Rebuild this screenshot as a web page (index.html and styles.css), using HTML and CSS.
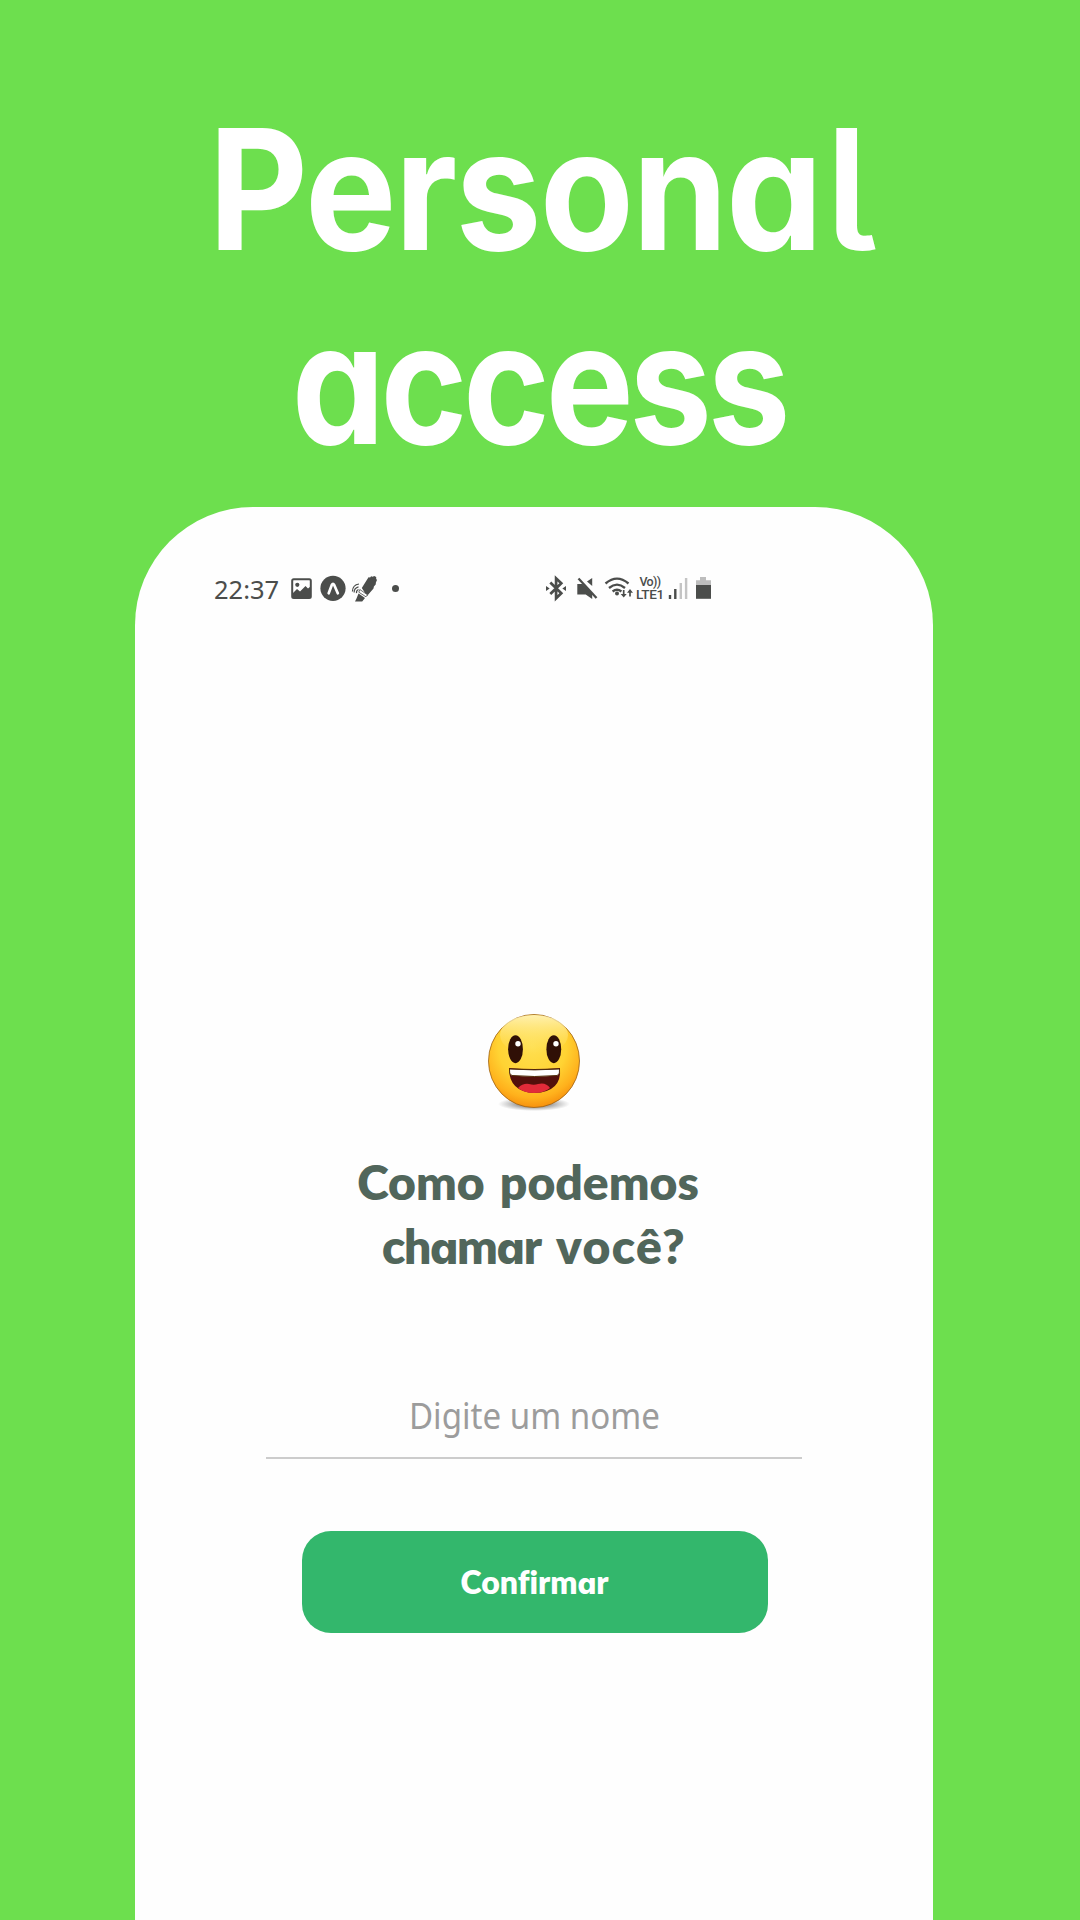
FILE: index.html
```html
<!DOCTYPE html>
<html lang="pt-BR">
<head>
<meta charset="utf-8">
<title>Personal access</title>
<link rel="stylesheet" href="styles.css">
</head>
<body>
<main class="poster">
  <h1 class="headline"><span class="headline-first">Persona<span class="wide-l">l</span></span><br><span class="headline-second">access</span></h1>
  <section class="phone">
    <header class="status">
      <div class="status-left">
        <time class="clock">22:37</time>
        <svg class="icon" width="22" height="30" viewBox="290 573 22 30"><rect x="292.2" y="579.2" width="18.6" height="18.8" rx="1.5" fill="none" stroke="currentColor" stroke-width="2"/><circle cx="297.3" cy="584.8" r="2.1" fill="currentColor"/><path d="M293 593l4-4 3 2.5 5.500-5.500 2.500 2.500 2.500-2v11.500h-17.500z" fill="currentColor"/></svg>
        <svg class="icon icon-expo" width="26" height="30" viewBox="320 573 26 30"><circle cx="333" cy="588.3" r="12.6" fill="currentColor"/><path d="M328.700 593.300l3.100-8.300q1.200-2.200 2.400 0l3.600 8.300" fill="none" stroke="#fff" stroke-width="2.700" stroke-linecap="round" stroke-linejoin="round"/></svg>
        <svg class="icon" width="27" height="30" viewBox="351 573 27 30"><path d="M361.800 588l6.700-10.700 1.600.2 1-1.200 1.600.5 1.500-.9 2 1v2.300l.9.600-1.200 2.600-.2 2.200-1.800 1.800-.4 2.200-6.500 7.400z" fill="currentColor"/><path d="M358.500 593.500l6.500 4.500-2.800 3.500h-7.200l1.500-3z" fill="currentColor"/><path d="M359.800 589.500l7.700 5.300-1.500 2-7.200-4.600z" fill="#fff" stroke="currentColor" stroke-width=".8"/><path d="M358.500 589.500q-2.300.9-2 3.600M358.500 586.800q-4.500 1.200-4.400 5.700M359 584q-6.300.7-6.600 7.500" fill="none" stroke="currentColor" stroke-width="1.200"/></svg>
        <i class="dot"></i>
      </div>
      <div class="status-right">
        <svg class="icon" width="22" height="30" viewBox="545 573 22 30"><path d="M550.300 582.500l11 10.800-5.200 5v-20l5.200 5-11 10.700" fill="none" stroke="currentColor" stroke-width="2.700"/><path d="M546 586l3.700 2.500-3.700 2.500zM566 586l-3.700 2.500 3.700 2.500z" fill="currentColor"/></svg>
        <svg class="icon icon-mute" width="22" height="30" viewBox="577 573 22 30"><path d="M577.300 584h5.200l9.700 9v6l-6.500-4.500h-8.400zM592.200 578v8l-5.200-4.600z" fill="currentColor"/><path d="M578.500 578.500l18 19.500" stroke="currentColor" stroke-width="2.300"/></svg>
        <svg class="icon" width="30" height="30" viewBox="604 573 30 30"><path d="M605.500 583.500q11.500-9.800 23 0M609 588q8-6.800 16 0M612.600 591.500q4.400-3.500 8.800 0" fill="none" stroke="currentColor" stroke-width="2.300"/><circle cx="617" cy="593.500" r="2" fill="currentColor"/><path d="M623.700 590v6M630 596.500v-6" stroke="currentColor" stroke-width="1.700"/><path d="M620.700 594h6l-3 3.500zM627 592.800h6l-3-3.800z" fill="currentColor"/></svg>
        <span class="carrier"><span class="carrier-voice">Vo))</span><span class="carrier-net">LTE1</span></span>
        <svg class="icon" width="20" height="30" viewBox="668 573 20 30"><path d="M670 595v4M675.300 589v10" stroke="currentColor" stroke-width="2.400"/><path d="M680.800 583v16M686.100 578v21" stroke="#c4c4c4" stroke-width="2.400"/></svg>
        <svg class="icon icon-battery" width="16" height="30" viewBox="695 573 16 30"><path d="M700 577h6v3.200h5v6h-15v-6h4z" fill="#bdbdbd"/><path d="M696 585h15v13.800h-15z" fill="currentColor"/></svg>
      </div>
    </header>
    <svg class="emoji" width="98" height="100" viewBox="0 0 98 100">
      <defs>
        <radialGradient id="face" cx=".48" cy=".34" r=".68"><stop offset="0" stop-color="#ffdf50"/><stop offset=".55" stop-color="#ffd333"/><stop offset=".82" stop-color="#ffb11c"/><stop offset="1" stop-color="#f58b0b"/></radialGradient>
        <linearGradient id="shine" x1="0" y1="0" x2="0" y2="1"><stop offset="0" stop-color="#fff8cf" stop-opacity=".8"/><stop offset="1" stop-color="#ffe66a" stop-opacity="0"/></linearGradient>
        <radialGradient id="shade"><stop offset="0" stop-color="#222" stop-opacity=".9"/><stop offset="1" stop-color="#555" stop-opacity="0"/></radialGradient>
      </defs>
      <ellipse cx="49" cy="91" rx="36" ry="7" fill="url(#shade)"/>
      <ellipse cx="49" cy="48" rx="45.500" ry="46.500" fill="url(#face)" stroke="#9d6214" stroke-width=".8"/>
      <ellipse cx="49" cy="22" rx="34" ry="20" fill="url(#shine)"/>
      <ellipse cx="30.500" cy="36.200" rx="7.400" ry="14" fill="#301006"/><ellipse cx="68.800" cy="36.200" rx="7.400" ry="14" fill="#301006"/>
      <circle cx="33" cy="30.700" r="2.700" fill="#fff"/><circle cx="71" cy="30.700" r="2.700" fill="#fff"/>
      <path d="M24 55q25 2 51 0 2 24-25.500 25Q24 79 24 55z" fill="#53100b"/>
      <path d="M33 75q5-5 11-4 5 1.500 9 0 8-2 12 4-6 5-16 5t-16-5z" fill="#e22b39"/>
      <path d="M24.500 56q25 1.800 50 0 .8 5-2.200 6.500-22.800 2-45.500 0-3.100-1.500-2.300-6.500z" fill="#fff" stroke="#53300b" stroke-width="1"/>
    </svg>
    <h2 class="question"><span class="question-first">Como podemos</span><br><span class="question-second"><span class="tight">ch<span class="round-a">a</span>m<span class="round-a">a</span>r</span> você?</span></h2>
    <div class="field"><span class="placeholder">Digite um nome</span></div>
    <button class="confirm">Confirm<span class="round-a">a</span>r</button>
  </section>
</main>
</body>
</html>
```
FILE: styles.css
```css
* { box-sizing: border-box; }
body { margin: 0; }
.poster {
  display: flex;
  flex-direction: column;
  width: 1080px;
  height: 1920px;
  overflow: hidden;
  background: #6ddf4e;
}
.headline {
  flex: none;
  height: 507px;
  margin: 0;
  padding-top: 92px;
  color: #fff;
  font: 650 168px/194px Inter, sans-serif;
  font-feature-settings: "cv11", "cv05";
  text-align: center;
  white-space: nowrap;
}
.headline-first, .headline-second, .wide-l { display: inline-block; }
.headline-first {
  margin-right: 8px;
  letter-spacing: -2px;
  transform: scaleX(.915);
}
.wide-l {
  margin-left: 1px;
  font-weight: 530;
  transform: scaleX(1.25);
  transform-origin: left;
}
.headline-second {
  margin-right: 2px;
  letter-spacing: -5px;
  transform: scaleX(.88);
}
.phone {
  display: flex;
  flex: 1;
  flex-direction: column;
  align-items: center;
  width: 798px;
  margin-left: 135px;
  border-radius: 118px 118px 0 0;
  background: #fefefe;
}
.status {
  display: flex;
  flex: none;
  align-self: stretch;
  height: 30px;
  margin-top: 66px;
  padding-left: 79px;
  color: #4b4d4b;
}
.status-left, .status-right { display: flex; align-items: center; gap: 5px; }
.status-left { width: 331px; }
.icon { display: block; flex: none; }
.icon-expo { margin-left: 3px; }
.icon-mute { margin-left: 5px; }
.icon-battery { margin-left: 2px; }
.clock {
  width: 71px;
  padding-top: 1px;
  font: 25.5px/30px "Noto Sans", sans-serif;
  white-space: nowrap;
}
.dot {
  width: 7px;
  height: 7px;
  margin-left: 9px;
  border-radius: 50%;
  background: currentColor;
}
.carrier {
  display: flex;
  flex-direction: column;
  align-items: center;
  width: 26px;
  margin-left: -2px;
  font: 500 13.5px/12px Roboto, sans-serif;
  letter-spacing: -.3px;
}
.carrier-voice { font-size: 12.5px; letter-spacing: -.6px; }
.emoji { flex: none; margin-top: 410px; }
.question {
  margin: 37px 0 0;
  color: #51665b;
  font: 800 48px/64px Lato, sans-serif;
  text-align: center;
  white-space: nowrap;
  word-spacing: 4px;
}
.question-first { margin-right: 12px; }
.question-second { letter-spacing: 1.4px; }
.tight { letter-spacing: -1.3px; }
.round-a {
  font-family: Inter, sans-serif;
  font-size: .925em;
  font-weight: 770;
  font-feature-settings: "cv11";
  line-height: 0;
}
.field {
  display: flex;
  align-items: center;
  justify-content: center;
  width: 536px;
  height: 84px;
  margin-top: 97px;
  border-bottom: 2px solid #ccc;
  color: #9c9c9c;
  font: 36px/50px "Noto Sans", sans-serif;
}
.placeholder { transform: scaleX(.92); }
.confirm {
  width: 466px;
  height: 102px;
  margin: 72px 0 0 1px;
  padding: 0;
  border: 0;
  border-radius: 29px;
  background: #33b76c;
  color: #fff;
  font: 800 32px/40px Lato, sans-serif;
  font-variant-ligatures: none;
}
```
